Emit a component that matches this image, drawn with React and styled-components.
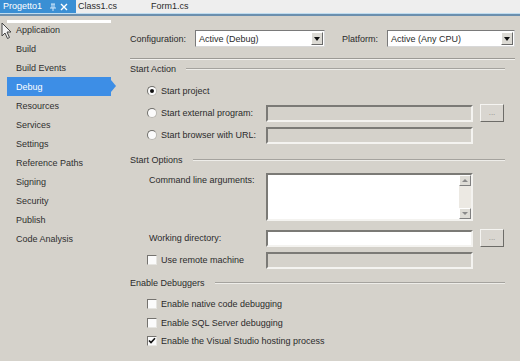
import React from "react";
import styled, { createGlobalStyle } from "styled-components";

const Global = createGlobalStyle`
  html, body { margin: 0; padding: 0; }
  body {
    width: 520px; height: 361px; overflow: hidden;
    background: #d5d2cb;
    font-family: "Liberation Sans", Arial, sans-serif;
    font-size: 9px;
    color: #2b2b2b;
  }
`;

const Page = styled.div`
  position: relative;
  width: 520px;
  height: 361px;
  background: #d5d2cb;
`;

const TabBar = styled.div`
  height: 13px;
  display: flex;
  align-items: stretch;
  background: #eeeeee;
  border-bottom: 1px solid #bfdcef;
  box-shadow: 0 2px 0 #6b8fae;
  margin-bottom: 2px;
`;

const Tab = styled.div`
  display: flex;
  align-items: center;
  padding: 0 4px 0 ${(p) => p.$pl || 3}px;
  width: ${(p) => p.$w}px;
  box-sizing: border-box;
  background: ${(p) => (p.$active ? "#3a8fd4" : "transparent")};
  color: ${(p) => (p.$active ? "#ffffff" : "#2b2b2b")};
  font-size: 9px;
  line-height: 13px;
  white-space: nowrap;
`;

const TabIcons = styled.span`
  display: flex;
  align-items: center;
  gap: 3px;
  margin-left: 7px;
`;

const Body = styled.div`
  display: flex;
`;

const Sidebar = styled.div`
  position: relative;
  width: 120px;
  padding: 4px 0 0 7px;
  box-sizing: border-box;
`;

const FocusBar = styled.div`
  position: absolute;
  left: 7px;
  top: 4px;
  width: 104px;
  height: 3px;
  background: #ffffff;
`;

const NavItem = styled.div`
  position: relative;
  width: 104px;
  height: 19px;
  display: flex;
  align-items: center;
  padding-left: 9px;
  box-sizing: border-box;
  background: ${(p) => (p.$active ? "#3d8ee6" : "transparent")};
  color: ${(p) => (p.$active ? "#ffffff" : "#2f2f2f")};
  &::after {
    content: "";
    display: ${(p) => (p.$active ? "block" : "none")};
    position: absolute;
    right: -5px;
    top: 3px;
    border-left: 5px solid #3d8ee6;
    border-top: 6px solid transparent;
    border-bottom: 6px solid transparent;
  }
`;

const Cursor = styled.svg`
  position: absolute;
  left: 1px;
  top: 22px;
`;

const Content = styled.div`
  flex: 1;
  padding: 14px 5px 0 10px;
  box-sizing: border-box;
`;

const ConfigRow = styled.div`
  display: flex;
  align-items: center;
  height: 17px;
`;

const Label = styled.span`
  width: ${(p) => p.$w}px;
  margin-left: ${(p) => p.$ml || 0}px;
  flex-shrink: 0;
  white-space: nowrap;
`;

const Select = styled.div`
  position: relative;
  width: ${(p) => p.$w}px;
  height: 17px;
  box-sizing: border-box;
  background: #ffffff;
  border: 1px solid #7a7a7a;
  border-right-color: #d8d8d8;
  border-bottom-color: #d8d8d8;
  display: flex;
  align-items: center;
  padding-left: 3px;
`;

const DropBtn = styled.div`
  position: absolute;
  right: 1px;
  top: 1px;
  width: 12px;
  height: 13px;
  box-sizing: border-box;
  background: #dcdad4;
  border: 1px solid;
  border-color: #ffffff #6a6a6a #6a6a6a #ffffff;
  display: flex;
  align-items: center;
  justify-content: center;
  &::before {
    content: "";
    border-top: 4px solid #111;
    border-left: 3.5px solid transparent;
    border-right: 3.5px solid transparent;
  }
`;

const Separator = styled.div`
  margin-top: 11px;
  height: 1px;
  background: #9c9a95;
  border-bottom: 1px solid #f2f1ee;
`;

const SectionHead = styled.div`
  display: flex;
  align-items: center;
  gap: 10px;
  height: 12px;
  margin-top: ${(p) => p.$mt}px;
  padding-right: 10px;
  white-space: nowrap;
  &::after {
    content: "";
    flex: 1;
    height: 1px;
    background: #a5a39e;
    border-bottom: 1px solid #eeede9;
  }
`;

const Row = styled.div`
  display: flex;
  align-items: ${(p) => (p.$top ? "flex-start" : "center")};
  height: ${(p) => p.$h || 22}px;
  margin-top: ${(p) => p.$mt || 0}px;
  padding-left: 17px;
`;

const Choice = styled.label`
  display: flex;
  align-items: center;
  gap: 4px;
  width: 119px;
  flex-shrink: 0;
  white-space: nowrap;
  padding-top: ${(p) => p.$pt || 0}px;
  padding-left: ${(p) => p.$pl || 0}px;
  box-sizing: border-box;
`;

const Radio = styled.span`
  flex-shrink: 0;
  width: 10px;
  height: 10px;
  border-radius: 50%;
  box-sizing: border-box;
  background: #fbfbfb;
  border: 1px solid #b9b7b1;
  border-top-color: #6f6e6a;
  border-left-color: #6f6e6a;
  display: flex;
  align-items: center;
  justify-content: center;
  &::before {
    content: "";
    width: 4px;
    height: 4px;
    border-radius: 50%;
    background: ${(p) => (p.$on ? "#111" : "transparent")};
  }
`;

const Check = styled.span`
  flex-shrink: 0;
  width: 10px;
  height: 10px;
  box-sizing: border-box;
  background: #fbfbfb;
  border: 1px solid #e6e5e1;
  border-top-color: #75736f;
  border-left-color: #75736f;
  display: flex;
  align-items: center;
  justify-content: center;
`;

const Field = styled.div`
  width: 207px;
  height: ${(p) => p.$h || 17}px;
  box-sizing: border-box;
  flex-shrink: 0;
  position: relative;
  background: ${(p) => (p.$white ? "#ffffff" : "#d5d2cb")};
  border: 2px solid;
  border-color: #7b7a76 #f4f3f0 #f4f3f0 #7b7a76;
`;

const Scroll = styled.div`
  position: absolute;
  right: 0;
  top: 0;
  bottom: 0;
  width: 12px;
  background: #ece9e3;
  display: flex;
  flex-direction: column;
  justify-content: space-between;
`;

const ScrollBtn = styled.div`
  height: 11px;
  box-sizing: border-box;
  background: #dedcd6;
  border: 1px solid;
  border-color: #ffffff #808080 #808080 #ffffff;
  display: flex;
  align-items: center;
  justify-content: center;
  &::before {
    content: "";
    border-left: 3px solid transparent;
    border-right: 3px solid transparent;
    ${(p) =>
      p.$up ? "border-bottom: 3px solid #8a8a8a;" : "border-top: 3px solid #8a8a8a;"}
  }
`;

const DotsBtn = styled.div`
  width: 24px;
  height: 18px;
  margin-left: 7px;
  box-sizing: border-box;
  background: #d9d6d0;
  border: 1px solid;
  border-color: #f5f4f1 #6d6c68 #6d6c68 #f5f4f1;
  color: #8d8b86;
  font-size: 8px;
  display: flex;
  align-items: center;
  justify-content: center;
  padding-bottom: 2px;
`;

const navItems = [
  "Application",
  "Build",
  "Build Events",
  "Debug",
  "Resources",
  "Services",
  "Settings",
  "Reference Paths",
  "Signing",
  "Security",
  "Publish",
  "Code Analysis",
];

const Tick = () => (
  <svg width="8" height="8" viewBox="0 0 8 8">
    <path d="M1 3.5 L3 5.6 L7 1.2" stroke="#111" strokeWidth="1.6" fill="none" />
  </svg>
);

export default function App() {
  return (
    <Page>
      <Global />
      <TabBar>
        <Tab $active $w={76}>
          Progetto1
          <TabIcons>
            <svg width="8" height="8" viewBox="0 0 8 8">
              <path d="M2 1 H6 M3 1 V5 M5 1 V5 M1 5 H7 M4 5 V8" stroke="#cfe6fa" strokeWidth="1" fill="none" />
            </svg>
            <svg width="8" height="8" viewBox="0 0 8 8">
              <path d="M1 1 L7 7 M7 1 L1 7" stroke="#ffffff" strokeWidth="1.4" />
            </svg>
          </TabIcons>
        </Tab>
        <Tab $w={72} $pl={2}>Class1.cs</Tab>
        <Tab $w={60}>Form1.cs</Tab>
      </TabBar>
      <Body>
        <Sidebar>
          <FocusBar />
          {navItems.map((n) => (
            <NavItem key={n} $active={n === "Debug"}>
              {n}
            </NavItem>
          ))}
        </Sidebar>
        <Content>
          <ConfigRow>
            <Label $w={65}>Configuration:</Label>
            <Select $w={130}>
              Active (Debug)
              <DropBtn />
            </Select>
            <Label $w={45} $ml={17}>Platform:</Label>
            <Select $w={128}>
              Active (Any CPU)
              <DropBtn />
            </Select>
          </ConfigRow>
          <Separator />
          <SectionHead $mt={3}>Start Action</SectionHead>
          <Row $mt={5}>
            <Choice>
              <Radio $on />
              Start project
            </Choice>
          </Row>
          <Row>
            <Choice>
              <Radio />
              Start external program:
            </Choice>
            <Field />
            <DotsBtn>...</DotsBtn>
          </Row>
          <Row>
            <Choice>
              <Radio />
              Start browser with URL:
            </Choice>
            <Field />
          </Row>
          <SectionHead $mt={8}>Start Options</SectionHead>
          <Row $top $h={48} $mt={7}>
            <Choice $pt={2} $pl={2}>Command line arguments:</Choice>
            <Field $white $h={48}>
              <Scroll>
                <ScrollBtn $up />
                <ScrollBtn />
              </Scroll>
            </Field>
          </Row>
          <Row $mt={6}>
            <Choice $pl={2}>Working directory:</Choice>
            <Field $white />
            <DotsBtn>...</DotsBtn>
          </Row>
          <Row>
            <Choice>
              <Check />
              Use remote machine
            </Choice>
            <Field />
          </Row>
          <SectionHead $mt={6}>Enable Debuggers</SectionHead>
          <Row $h={18} $mt={6}>
            <Choice>
              <Check />
              Enable native code debugging
            </Choice>
          </Row>
          <Row $h={19}>
            <Choice>
              <Check />
              Enable SQL Server debugging
            </Choice>
          </Row>
          <Row $h={17}>
            <Choice>
              <Check>
                <Tick />
              </Check>
              Enable the Visual Studio hosting process
            </Choice>
          </Row>
        </Content>
      </Body>
      <Cursor width="12" height="18" viewBox="0 0 12 18">
        <path d="M1 1 L1 14 L4 11 L6.5 16.5 L8.5 15.5 L6 10 L10 10 Z" fill="#f4f4f4" stroke="#444" strokeWidth="1" />
      </Cursor>
    </Page>
  );
}
